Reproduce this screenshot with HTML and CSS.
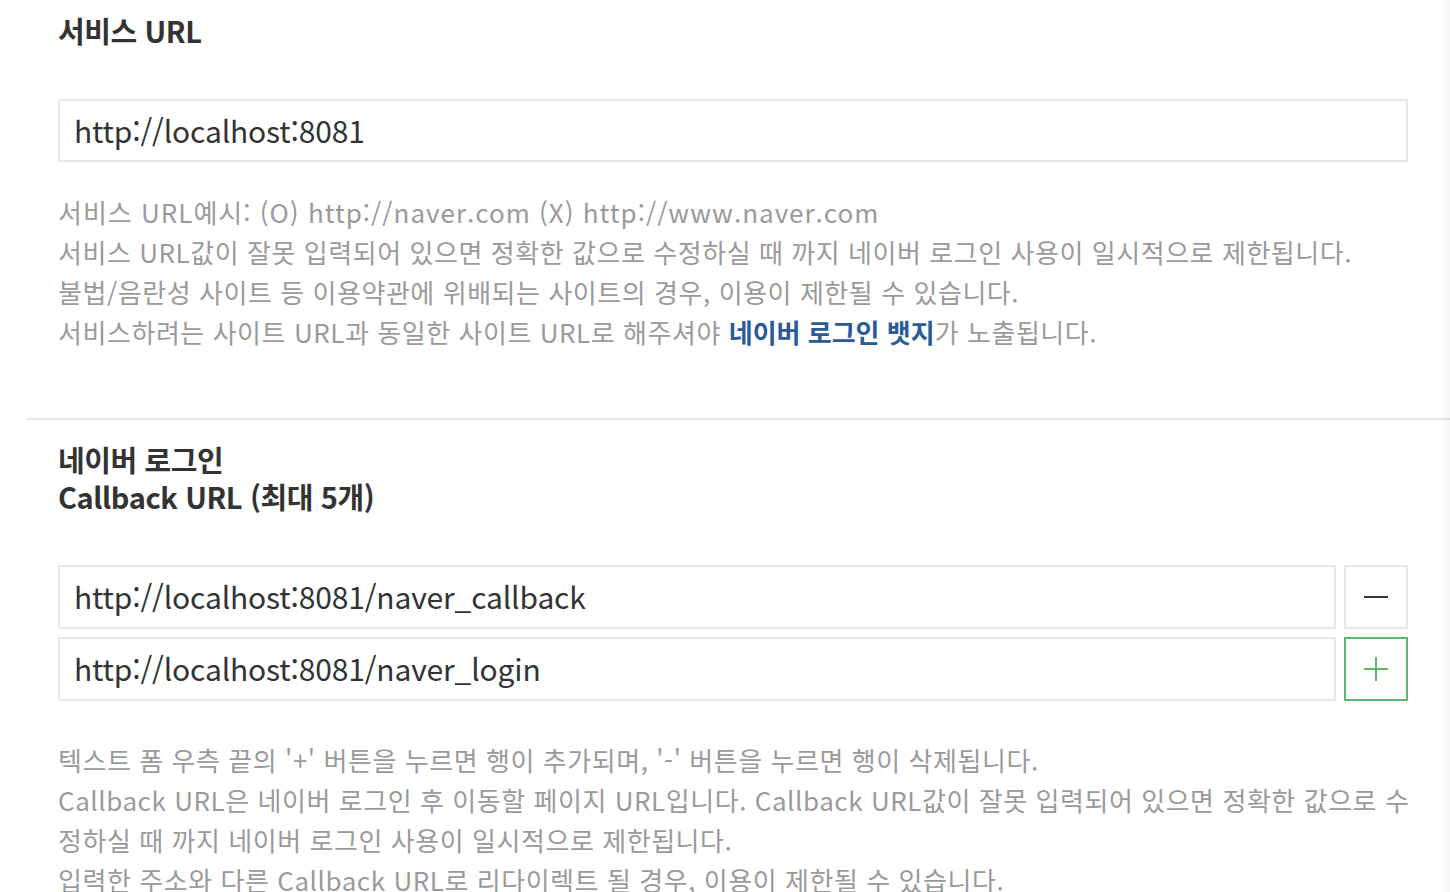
FILE: index.html
```html
<!DOCTYPE html>
<html lang="ko">
<head>
<meta charset="utf-8">
<title>서비스 URL</title>
<link rel="stylesheet" href="styles.css">
</head>
<body>
<div class="page">
  <section class="section first">
    <h3 class="label">서비스 URL</h3>
    <div class="field"><div class="input">http://localhost:8081</div></div>
    <ul class="help">
      <li class="example">서비스 URL예시: (O) http://naver.com (X) http://www.naver.com</li>
      <li>서비스 URL값이 잘못 입력되어 있으면 정확한 값으로 수정하실 때 까지 네이버 로그인 사용이 일시적으로 제한됩니다.</li>
      <li>불법/음란성 사이트 등 이용약관에 위배되는 사이트의 경우, 이용이 제한될 수 있습니다.</li>
      <li>서비스하려는 사이트 URL과 동일한 사이트 URL로 해주셔야 <strong class="link">네이버 로그인 뱃지</strong>가 노출됩니다.</li>
    </ul>
  </section>
  <section class="section second">
    <h3 class="label">네이버 로그인<br>Callback URL (최대 5개)</h3>
    <div class="rows">
      <div class="row">
        <div class="input">http://localhost:8081/naver_callback</div>
        <button class="btn minus" type="button" aria-label="삭제"><span class="bar-h"></span></button>
      </div>
      <div class="row">
        <div class="input">http://localhost:8081/naver_login</div>
        <button class="btn plus" type="button" aria-label="추가"><span class="bar-h"></span><span class="bar-v"></span></button>
      </div>
    </div>
    <ul class="help help2">
      <li>텍스트 폼 우측 끝의 '+' 버튼을 누르면 행이 추가되며, '-' 버튼을 누르면 행이 삭제됩니다.</li>
      <li>Callback URL은 네이버 로그인 후 이동할 페이지 URL입니다. Callback URL값이 잘못 입력되어 있으면 정확한 값으로 수정하실 때 까지 네이버 로그인 사용이 일시적으로 제한됩니다.</li>
      <li>입력한 주소와 다른 Callback URL로 리다이렉트 될 경우, 이용이 제한될 수 있습니다.</li>
    </ul>
  </section>
</div>
<div class="edge-shadow"></div>
</body>
</html>
```
FILE: styles.css
```css
html, body {
  margin: 0;
  padding: 0;
  background: #fff;
  overflow: hidden;
}
body {
  font-family: "Noto Sans CJK KR", "Noto Sans", sans-serif;
  color: #333;
  height: 892px;
}
.page {
  margin-left: 26px;
  width: 1424px;
}
.section {
  padding: 0 42px 0 32px;
}
.section.first {
  padding-top: 12px;
  padding-bottom: 66px;
  border-bottom: 2px solid #e8e8e8;
}
.section.second {
  padding-top: 21px;
}
.label {
  margin: 0;
  font-size: 29px;
  line-height: 37px;
  font-weight: 700;
  color: #333;
  letter-spacing: -0.4px;
}
.field {
  margin-top: 50px;
}
.input {
  box-sizing: border-box;
  height: 63px;
  border: 2px solid #e6e6e6;
  padding: 0 14px;
  font-size: 30px;
  line-height: 59px;
  color: #333;
  white-space: nowrap;
  flex: 1;
  letter-spacing: -0.15px;
}
.row .input,
.row .btn {
  height: 64px;
}
.help {
  list-style: none;
  margin: 30px -12px 0 0;
  padding: 0;
  font-size: 26px;
  line-height: 40px;
  color: #9a9a9a;
  letter-spacing: 0.55px;
}
.help .example {
  letter-spacing: 1px;
}
.help2 {
  margin-top: 39px;
}
.link {
  color: #2b5b96;
  font-weight: 700;
  letter-spacing: 0;
}
.rows {
  margin-top: 50px;
  display: flex;
  flex-direction: column;
  gap: 8px;
}
.row {
  display: flex;
  gap: 8px;
}
.btn {
  box-sizing: border-box;
  width: 64px;
  height: 63px;
  background: #fff;
  border: 2px solid #e6e6e6;
  padding: 0;
  display: flex;
  align-items: center;
  justify-content: center;
  position: relative;
}
.btn.plus {
  border-color: #62b56f;
}
.bar-h {
  display: block;
  width: 24px;
  height: 2px;
  background: #333;
}
.plus .bar-h {
  background: #62b56f;
}
.bar-v {
  position: absolute;
  left: 50%;
  top: 50%;
  width: 2px;
  height: 24px;
  margin: -12px 0 0 -1px;
  background: #62b56f;
}
.edge-shadow {
  position: fixed;
  top: 0;
  right: 0;
  width: 12px;
  height: 100%;
  background: linear-gradient(to right, rgba(0,0,0,0), rgba(0,0,0,0.035));
}
```
